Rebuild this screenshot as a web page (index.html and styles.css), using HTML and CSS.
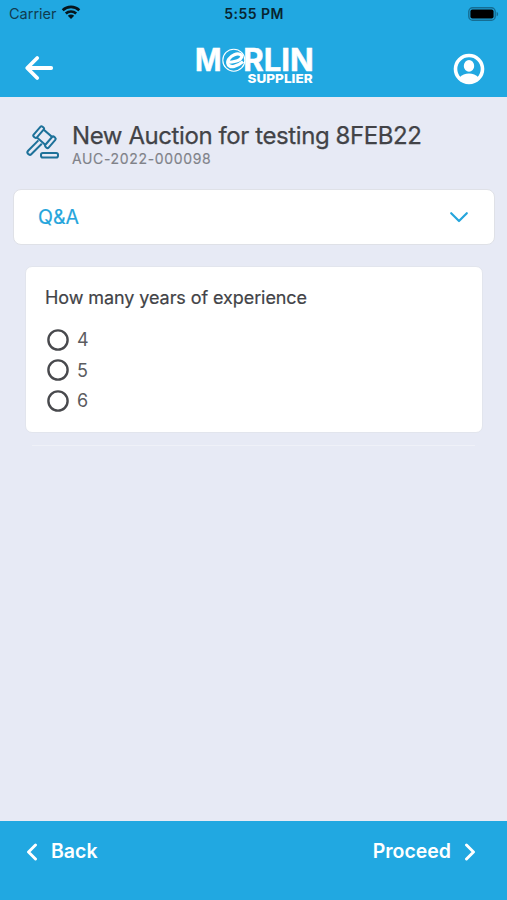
FILE: index.html
```html
<!DOCTYPE html>
<html lang="en">
<head>
<meta charset="utf-8">
<title>Merlin Supplier</title>
<link rel="stylesheet" href="styles.css">
</head>
<body>
<div class="app">
  <header class="header">
    <div class="status">
      <div class="carrier"><span>Carrier</span>
        <svg width="20" height="15" viewBox="0 0 20 15" fill="none" stroke="#06151c" stroke-width="2.7"><path d="M1.7 5.200C6.400.8 13.600.8 18.300 5.200M4.800 8.500c3-2.700 7.400-2.700 10.400 0"/><path d="M10 14 6.800 10.800c1.800-1.600 4.600-1.600 6.400 0z" fill="#06151c" stroke="none"/></svg>
      </div>
      <div class="time">5:55 PM</div>
      <svg class="battery" width="31" height="14" viewBox="0 0 31 14"><rect x=".8" y=".8" width="26.4" height="12.4" rx="3.8" fill="none" stroke="#156d93" stroke-width="1.4"/><rect x="2.4" y="2.4" width="23.2" height="9.2" rx="2" fill="#000"/><path d="M28.600 4.700c2 .8 2 3.800 0 4.600z" fill="#156d93"/></svg>
    </div>
    <div class="nav">
      <svg class="arrow" width="30" height="26" viewBox="0 0 30 26" fill="none" stroke="#fff" stroke-width="3.8" stroke-linecap="round" stroke-linejoin="round"><path d="M13.200 3 3.200 13l10 10M4 13h23.200"/></svg>
      <svg class="logo" width="124" height="50" viewBox="192 40 124 50" fill="#fff">
        <text class="brand" x="194" y="71" textLength="26.500" lengthAdjust="spacingAndGlyphs">M</text>
        <text class="brand" x="242.300" y="71" textLength="70.500" lengthAdjust="spacingAndGlyphs">RLIN</text>
        <circle cx="232.800" cy="60.200" r="11" fill="#21a8e1" stroke="#fff" stroke-width="1.100"/>
        <path d="M225.500 62.200c5.500.4 13.500-1.200 15-4.900.9-3-3.200-4.300-7.200-2.600-4.800 2-7.800 6.600-6.100 9.900 2 3.600 9 2 14.800-3" fill="none" stroke="#fff" stroke-width="3.200"/>
        <text class="supplier" x="246.600" y="83.400" textLength="65" lengthAdjust="spacingAndGlyphs">SUPPLIER</text>
      </svg>
      <svg class="profile" width="32" height="32" viewBox="0 0 32 32"><circle cx="16" cy="16" r="13.500" fill="none" stroke="#fff" stroke-width="3.600"/><ellipse cx="16" cy="12.900" rx="5.200" ry="5.800" fill="#fff"/><path d="M6.500 24.500c4.500-5.200 14.500-5.200 19 0-4.500 6-14.500 6-19 0z" fill="#fff"/></svg>
    </div>
  </header>
  <main class="content">
    <section class="auction">
      <svg class="gavel" width="36" height="36" viewBox="0 0 36 36" fill="none" stroke="#1d7199" stroke-width="2" stroke-linejoin="round"><g transform="rotate(41 20.500 12.200)"><rect x="14" y="7" width="13" height="10.400"/><rect x="10.600" y="5.600" width="4.300" height="13.200" rx="1.500" fill="#e7eaf5"/><rect x="26.100" y="5.600" width="4.300" height="13.200" rx="1.500" fill="#e7eaf5"/></g><path d="m14.400 15.400-10.300 10.400a2.200 2.200 0 0 0 3.400 3.200l10.300-10.300"/><rect x="17" y="28" width="17" height="4.600" rx="1.800"/></svg>
      <div class="heading"><h1>New Auction for testing 8FEB22</h1><p>AUC-2022-000098</p></div>
    </section>
    <section class="panel"><span>Q&amp;A</span>
      <svg width="20" height="14" viewBox="0 0 20 14" fill="none" stroke="#25a5dc" stroke-width="2.200" stroke-linecap="round" stroke-linejoin="round"><path d="m2.200 3.200 7.800 7.800 7.800-7.800"/></svg>
    </section>
    <section class="question">
      <h2>How many years of experience</h2>
      <div class="option"><svg width="22" height="22" viewBox="0 0 22 22"><circle class="ring" cx="11" cy="11" r="9.600"/></svg><span>4</span></div>
      <div class="option"><svg width="22" height="22" viewBox="0 0 22 22"><circle class="ring" cx="11" cy="11" r="9.600"/></svg><span>5</span></div>
      <div class="option"><svg width="22" height="22" viewBox="0 0 22 22"><circle class="ring" cx="11" cy="11" r="9.600"/></svg><span>6</span></div>
    </section>
    <div class="divider"></div>
  </main>
  <footer class="footer">
    <div class="action"><svg width="12" height="18" viewBox="0 0 12 18" fill="none" stroke="#fff" stroke-width="2.900" stroke-linecap="round" stroke-linejoin="round"><path d="M9.500 2 2.500 9l7 7"/></svg><span>Back</span></div>
    <div class="action"><span>Proceed</span><svg width="12" height="18" viewBox="0 0 12 18" fill="none" stroke="#fff" stroke-width="2.900" stroke-linecap="round" stroke-linejoin="round"><path d="m2.500 2 7 7-7 7"/></svg></div>
  </footer>
</div>
</body>
</html>
```
FILE: styles.css
```css
* { box-sizing: border-box; }
body { margin: 0; font-family: Inter, "Liberation Sans", sans-serif; color: #424347; }
h1, h2, p { margin: 0; }
svg { display: block; flex: none; }
.app { height: 900px; display: flex; flex-direction: column; background: #e7eaf5; }
.header { height: 97px; background: #21a8e1; }
.status { height: 27px; padding: 0 8px 0 9px; display: grid; grid-template-columns: 1fr auto 1fr; align-items: center; }
.carrier { display: flex; align-items: center; gap: 5px; font-size: 14.5px; line-height: 20px; color: #103c50; }
.carrier svg { margin-top: -2px; margin-left: -1px; }
.time { font-size: 14px; font-weight: 600; color: #082430; letter-spacing: .45px; }
.battery { justify-self: end; }
.nav { height: 70px; padding: 0 22px 0 24px; display: grid; grid-template-columns: 1fr 124px 1fr; align-items: start; }
.arrow { margin-top: 28px; }
.logo { margin-top: 13px; overflow: visible; }
.profile { justify-self: end; margin-top: 26px; }
.brand { font: 700 31px Inter, sans-serif; stroke: #fff; stroke-width: .5px; }
.supplier { font: 800 12px Inter, sans-serif; }
.content { flex: 1; }
.auction { height: 92px; padding: 24px 24px 0; display: flex; gap: 12px; }
.gavel { margin-top: 4px; }
h1 { font-size: 24px; line-height: 30px; font-weight: 400; letter-spacing: -.41px; -webkit-text-stroke: .25px #424347; }
.heading p { font-size: 14px; line-height: 16px; color: #808289; letter-spacing: .65px; -webkit-text-stroke: .15px #808289; }
.panel { height: 56px; margin: 0 12px 0 13px; padding: 0 25px 0 24px; display: flex; align-items: center; justify-content: space-between; background: #fff; border: 1px solid #dfe1e7; border-radius: 8px; color: #25a5dc; font-size: 19.5px; -webkit-text-stroke: .2px #25a5dc; }
.question { height: 167px; margin: 21px 24px 0 25px; padding: 19px 19px 0; background: #fff; border: 1px solid #e2e5ed; border-radius: 7px; }
h2 { font-size: 18px; line-height: 24px; font-weight: 400; letter-spacing: -.08px; margin-bottom: 14.5px; -webkit-text-stroke: .2px #424347; }
.option { height: 30.5px; display: flex; align-items: center; gap: 8px; padding-left: 2px; font-size: 18px; color: #5b5c60; }
.ring { fill: none; stroke: #48494d; stroke-width: 2.4px; }
.divider { height: 1px; margin: 12px 32px 0; background: #eff1f8; }
.footer { height: 79px; background: #21a8e1; padding: 18px 31px 0 26px; display: flex; justify-content: space-between; align-items: flex-start; color: #fff; font-size: 19.5px; line-height: 24px; font-weight: 600; }
.action { display: flex; align-items: center; gap: 13px; }
.action svg { margin-top: 2px; }
```
